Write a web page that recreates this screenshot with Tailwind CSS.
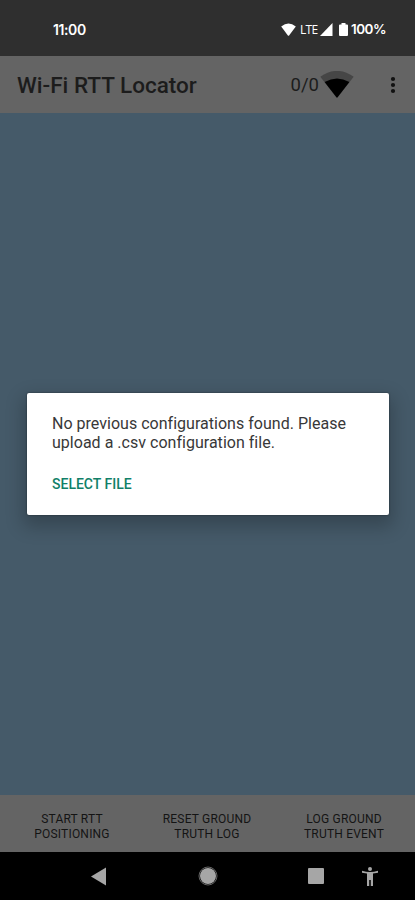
<!DOCTYPE html>
<html lang="en">

<head>
  <meta charset="UTF-8" />
  <meta name="viewport" content="width=device-width, initial-scale=1" />
  <title>Wi-Fi RTT Locator</title>
  <script src="https://cdn.jsdelivr.net/npm/@tailwindcss/browser@4"></script>
</head>

<body class="relative flex h-[900px] w-[415px] flex-col overflow-hidden bg-[#455a69] font-['Roboto',sans-serif]">
  <!-- Status bar -->
  <div class="flex h-14 shrink-0 items-center bg-[#2f2f2f] pt-[3px] pl-[53px] text-white">
    <span class="font-['Inter',sans-serif] text-[14px] font-semibold tracking-[-0.4px]">11:00</span>
    <div class="ml-auto flex w-[134px] items-center">
      <svg class="h-[13px] w-[15px]" viewBox="0 0 15 13" fill="currentColor">
        <path d="M.2 3.500Q7.500-2.300 14.800 3.500L8.100 12.400Q7.500 13 6.900 12.400Z" />
      </svg>
      <span class="ml-1 w-[19px] font-['Open_Sans',sans-serif] text-[12px] tracking-[-0.7px]">LTE</span>
      <svg class="ml-[1px] h-[13px] w-[13px]" viewBox="0 0 13 13" fill="currentColor">
        <path d="M0 13 12.500 0V13Z" />
      </svg>
      <svg class="ml-[6px] h-[13px] w-[9px]" viewBox="0 0 9 13" fill="currentColor">
        <path d="M2.500 0h4v1.500H8q1 0 1 1V12q0 1-1 1H1q-1 0-1-1V2.500q0-1 1-1h1.500Z" />
      </svg>
      <span class="ml-[3px] font-['Inter',sans-serif] text-[13.500px] font-semibold tracking-[-0.500px]">100%</span>
    </div>
  </div>

  <!-- App bar -->
  <header class="flex h-[57px] shrink-0 items-center bg-[#646464] pr-[18px] pl-[17px] text-[#1c1c1c]">
    <h1 class="pt-[3px] text-[22.500px] font-medium whitespace-nowrap">Wi-Fi RTT Locator</h1>
    <span class="ml-auto pt-[3px] text-[18.500px]">0/0</span>
    <svg class="ml-[1px] h-[27px] w-[34px]" viewBox="0 0 34 27">
      <path d="M.3 5.800Q17-6 33.700 5.800L17.800 26Q17 27 16.200 26Z" fill="#464646" />
      <path d="M4.600 11Q17 4 29.400 11L17.800 26Q17 27 16.200 26Z" fill="#000" />
    </svg>
    <svg class="ml-[35px] h-[18px] w-2" viewBox="0 0 8 18" fill="#111">
      <circle cx="4" cy="3" r="2.100" />
      <circle cx="4" cy="9" r="2.100" />
      <circle cx="4" cy="15" r="2.100" />
    </svg>
  </header>

  <!-- Empty map area with the dialog over it -->
  <main class="flex-1 px-[27px] pt-[280px]">
    <div class="h-[122px] w-[362px] rounded-[2px] bg-white pt-[21px] pl-[25px] shadow-[0_8px_18px_4px_rgba(0,0,0,0.22),0_0_2px_rgba(0,0,0,0.5)]">
      <p class="text-[16px] leading-[19px] tracking-[0.02px] whitespace-nowrap text-[#383838]">No previous configurations found. Please<br />upload a .csv configuration file.</p>
      <button class="mt-[23px] block text-[14px] leading-[18px] font-medium text-[#118068]">SELECT FILE</button>
    </div>
  </main>

  <!-- Actions -->
  <div class="flex h-[57px] shrink-0 items-start justify-between bg-[#646464] pt-[17px] pr-[31px] pl-[34px] text-center text-[12px] leading-[14.500px] tracking-[0.2px] whitespace-nowrap text-[#141414]">
    <button class="w-[76px]">START RTT<br />POSITIONING</button>
    <button class="w-[90px]">RESET GROUND<br />TRUTH LOG</button>
    <button class="w-[80px]">LOG GROUND<br />TRUTH EVENT</button>
  </div>

  <!-- System navigation -->
  <nav class="flex h-12 shrink-0 items-center bg-black pl-[91px] text-[#a6a6a6]">
    <svg class="h-[19px] w-[15px]" viewBox="0 0 15 19" fill="currentColor">
      <path d="M15 .5V18.500L0 9.500Z" />
    </svg>
    <svg class="ml-[92px] h-5 w-5" viewBox="0 0 20 20" fill="currentColor">
      <circle cx="10" cy="10" r="8" />
      <circle cx="10" cy="10" r="9" fill="none" stroke="currentColor" stroke-width="1" opacity=".6" />
    </svg>
    <svg class="ml-[90px] h-4 w-4" viewBox="0 0 16 16" fill="currentColor">
      <rect width="16" height="16" rx="1" />
    </svg>
    <svg class="ml-[38px] h-[19px] w-4" viewBox="0 0 16 19" fill="currentColor">
      <circle cx="8" cy="2" r="2" />
      <path d="M0 3.700Q8 6.300 16 3.700V5.700L11 6.500V19H8.800V13H7.200V19H5V6.500L0 5.700Z" />
    </svg>
  </nav>
</body>

</html>
